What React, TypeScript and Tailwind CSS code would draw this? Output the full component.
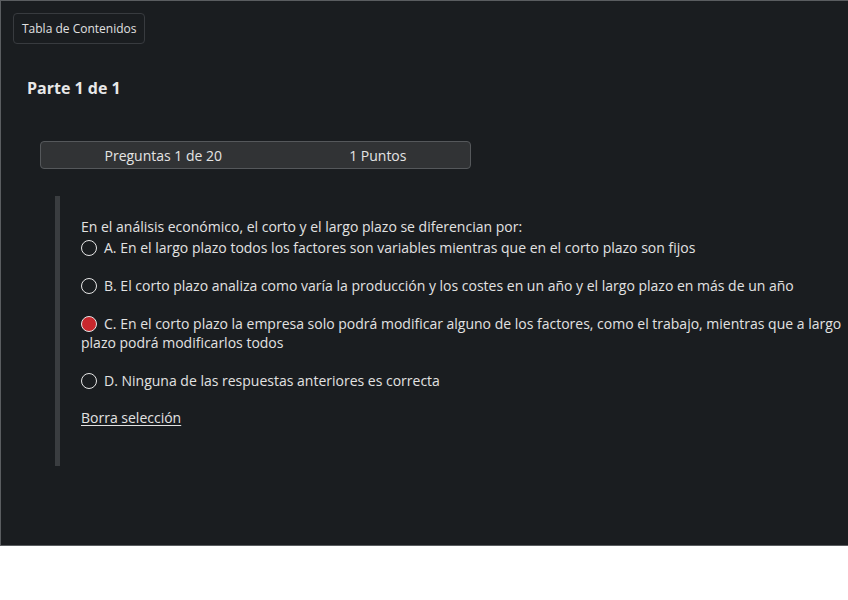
import React from 'react';

const options = [
  { id: 'A', text: 'En el largo plazo todos los factores son variables mientras que en el corto plazo son fijos' },
  { id: 'B', text: 'El corto plazo analiza como varía la producción y los costes en un año y el largo plazo en más de un año' },
  { id: 'C', text: 'En el corto plazo la empresa solo podrá modificar alguno de los factores, como el trabajo, mientras que a largo plazo podrá modificarlos todos' },
  { id: 'D', text: 'Ninguna de las respuestas anteriores es correcta' },
];

const Radio: React.FC<{ checked: boolean }> = ({ checked }) => (
  <span
    className={`inline-block align-[-3px] w-[16px] h-[16px] rounded-full border-[1.5px] mr-[7px] ${
      checked ? 'bg-[#c8282d] border-[#e6e6e6]' : 'bg-transparent border-[#e6e6e6]'
    }`}
  />
);

export default function App() {
  const selected = 'C';

  return (
    <div
      className="w-[848px] h-[546px] bg-[#1a1d20] border-t border-l border-b border-[#5a5d60] pt-3 pl-3 text-[#e2e2e2]"
      style={{ fontFamily: '"Open Sans", "Noto Sans", sans-serif' }}
    >
      <button className="h-[31px] px-[8px] text-[12px] text-[#e0e0e0] border border-[#383b3f] rounded-[4px] bg-[#1a1d20]">
        Tabla de Contenidos
      </button>

      <h2 className="mt-[33px] ml-[14px] text-[16px] leading-[22px] font-bold text-[#e8e8e8]">Parte 1 de 1</h2>

      <div className="mt-[42px] ml-[27px] w-[431px] h-[28px] flex items-center justify-around bg-[#313335] border border-[#55585b] rounded-[4px] text-[14px] text-[#e4e4e4]">
        <span>Preguntas 1 de 20</span>
        <span>1 Puntos</span>
      </div>

      <div className="mt-[27px] ml-[42px] h-[270px] border-l-[5px] border-[#3a3d40] pl-[21px] pt-[21px] text-[14px] leading-[19px]">
        <p>En el análisis económico, el corto y el largo plazo se diferencian por:</p>
        <div className="mt-[2px] flex flex-col gap-[19px]">
          {options.map((o) => (
            <p key={o.id}>
              <Radio checked={o.id === selected} />
              {`${o.id}. ${o.text}`}
            </p>
          ))}
        </div>
        <p className="mt-[18px] underline underline-offset-2">Borra selección</p>
      </div>
    </div>
  );
}
